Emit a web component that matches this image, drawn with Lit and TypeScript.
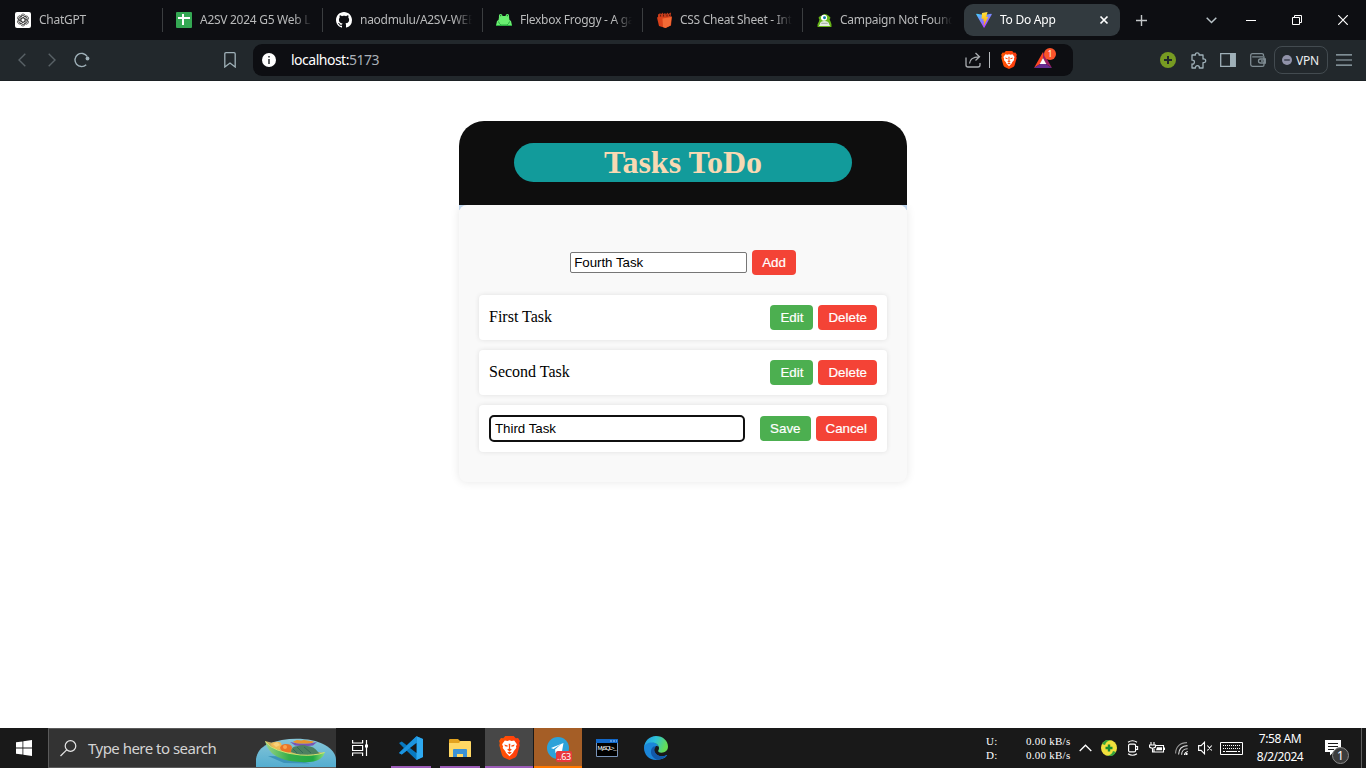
import { LitElement, html, css, svg, nothing, type TemplateResult } from "lit";
import { customElement, property } from "lit/decorators.js";

const icon = (w: number, h: number, box: string, body: unknown) =>
  html`<svg width=${w} height=${h} viewBox=${box} fill="none" aria-hidden="true">${body}</svg>`;

const braveLion = (size: number, h: number) =>
  icon(size, h, "0 0 20 23", svg`
    <defs><linearGradient id="lg" x1="0" x2="1"><stop stop-color="#ff5500"/><stop offset="1" stop-color="#ff3a10"/></linearGradient></defs>
    <path fill="url(#lg)" d="M6 0h8l2 2.200 2.200-.2L20 4.800l-.7 2 .5 2-2.600 9.500c-.3 1-.9 1.700-1.700 2.200L10 23l-5.500-2.500c-.8-.5-1.400-1.200-1.700-2.200L.2 8.800l.5-2L0 4.800 1.800 2l2.200.2z"/>
    <path fill="#fff" d="M5.500 4.200 8 4.700l2-.6 2 .6 2.500-.5 2.600 3.600-.9 2.300.3 1.400-2.500 3-.6 1.500L10 19.500 6.600 16 6 14.500l-2.500-3 .3-1.400-.9-2.300z"/>
    <path fill="#ff4a0a" d="m5 8.200 3.300 1-.2 1.200-2.300-.5zM15 8.200l-3.300 1 .2 1.200 2.300-.5zM9.200 7.500h1.600l-.3 4.500 1.800 1.100L10 14.500l-2.300-1.400 1.800-1.100zM7.800 15.800l2.200-1 2.200 1L10 17.400z"/>`);

const favicons: Record<string, TemplateResult> = {
  gpt: icon(16, 16, "0 0 16 16", svg`<rect width="16" height="16" rx="2" fill="#fff"/>
    <g stroke="#333" stroke-width=".75">
      ${[0, 60, 120, 180, 240, 300].map((a) => svg`<path transform="rotate(${a} 8 8)" d="M5.900 6.800V4.300C5.900 1.700 9.200 1.400 10.200 3.300M5.900 6.800 8 5.600l2.300 1.300M5.900 4.500 8 3.300l3.300 1.900"/>`)}
    </g>`),
  sheet: icon(16, 16, "0 0 16 16", svg`<rect width="16" height="16" rx="1" fill="#34a853"/><path d="M7 2v11M2 6h12" stroke="#fff" stroke-width="2"/>`),
  github: icon(16, 16, "0 0 16 16", svg`<path fill="#fff" d="M8 0C3.580 0 0 3.580 0 8c0 3.540 2.290 6.530 5.470 7.590.4.070.55-.17.55-.38 0-.19-.01-.82-.01-1.490-2.010.37-2.530-.49-2.690-.94-.09-.23-.48-.94-.82-1.130-.28-.15-.68-.52-.01-.53.63-.01 1.080.58 1.230.82.72 1.210 1.870.87 2.330.66.070-.52.28-.87.51-1.070-1.780-.2-3.640-.89-3.640-3.950 0-.87.31-1.590.82-2.150-.08-.2-.36-1.020.08-2.120 0 0 .67-.21 2.200.82.64-.18 1.320-.27 2-.27s1.360.09 2 .27c1.530-1.040 2.200-.82 2.200-.82.44 1.100.16 1.920.08 2.120.51.56.82 1.270.82 2.150 0 3.070-1.870 3.750-3.650 3.950.29.25.54.73.54 1.480 0 1.070-.01 1.930-.01 2.200 0 .21.15.46.55.38A8.010 8.010 0 0 0 16 8c0-4.420-3.580-8-8-8z"/>`),
  froggy: icon(16, 12, "0 0 16 12", svg`<path fill="#69ef70" d="M3 3Q2.500 0 4.500 0T6.500 2h3Q9.500 0 11.500 0T13 3l.5 3 1.500 1 1 4.500H0L1 7l1.500-1z"/><path fill="#178a2c" d="M4 1h1.200v1.200H4zM10.800 1H12v1.200h-1.200z"/><path stroke="#2aab3f" d="M2.500 7.500Q3 10 5 11h6q2-1 2.500-3.500M0 11.500h16"/>`),
  hand: icon(15, 16, "0 0 15 16", svg`<path fill="#d9411a" d="M0 5.500 4 4l11 .5-1 9L8.500 16 2 14z"/><path fill="#c63c1b" d="M1 5V2.500L3.500 1v1.500L6 .5V2l2.500-1v1.500L11 .5V2l3-1.500L13.500 5z"/><path fill="#f26a35" d="m5.500 6.500 9-1.500-1 8.500-5 2.500-2.500-1z"/><path stroke="#3b1208" stroke-width=".7" d="M3.500 4.500V3M6.500 4.500V2.500M10 4.500v-2M12.500 4V2.500"/>`),
  monster: icon(15, 13, "0 0 15 14", svg`<path fill="#67b518" d="m1 4 2-2 2 1V1l2.500-1L10 .500 12 2l2 2-1 2 1 2 1 3v3H0v-3l1.500-3L2 6z"/><circle cx="7" cy="4" r="3.300" fill="#fff"/><circle cx="7.500" cy="4" r="1.600" fill="#0a77a8"/><path fill="#e3ebe0" d="M2.500 11q.5-3.500 5-3.500t5 3.500l1 2h-12z"/><path stroke="#9aa39a" d="M4 10h7"/>`),
  vite: icon(16, 16, "0 0 32 32", svg`<defs><linearGradient id="v1" x1="0" y1="0" x2=".6" y2="1"><stop stop-color="#41d1ff"/><stop offset="1" stop-color="#bd34fe"/></linearGradient><linearGradient id="v2" x1=".4" y1="0" x2=".5" y2="1"><stop stop-color="#ffea83"/><stop offset=".1" stop-color="#ffdd35"/><stop offset="1" stop-color="#ffa800"/></linearGradient></defs>
    <path fill="url(#v1)" d="M31.500 5 17 31q-.8 1.300-1.600 0L.5 5q-.7-1.600 1-1.500L16 6l14.500-2.500q1.700 0 1 1.500z"/><path fill="url(#v2)" d="m23 0-11 2.200-.8 11.800 4-.8-.8 5 2.400-.6-1.600 8 1.200.4 8.200-16.500-4.200.7L23 0z"/>`),
};

@customElement("browser-tab")
class BrowserTab extends LitElement {
  @property() name = "";
  @property() fav = "";
  @property({ type: Boolean, reflect: true }) active = false;
  static styles = css`
    :host { display: flex; align-items: center; height: 24px; width: 160px; box-sizing: border-box; padding-left: 13px; border-right: 1px solid #3b3e40; flex: none; }
    :host([first]) { width: 161px; }
    :host([last]) { border-right-color: transparent; width: 161px; }
    :host([active]) { height: 32px; width: 156px; padding-left: 12px; border: 0; border-radius: 9px; background: #323a3f; }
    .fav { width: 16px; height: 16px; display: grid; place-items: center; margin-right: 8px; flex: none; }
    .name { width: 112px; overflow: hidden; white-space: nowrap; font: 12px/20px "Noto Sans", "Open Sans", sans-serif; letter-spacing: -0.28px; color: #b9babb; -webkit-mask-image: linear-gradient(90deg, #000 84%, transparent); mask-image: linear-gradient(90deg, #000 84%, transparent); }
    :host([active]) .name { width: 99px; color: #fff; letter-spacing: -0.25px; }
  `;
  render() {
    return html`<span class="fav">${favicons[this.fav]}</span><span class="name">${this.name}</span>
      ${this.active ? icon(10, 10, "0 0 10 10", svg`<path stroke="#fff" stroke-width="1.700" d="m1.500 1.500 7 7m0-7-7 7"/>`) : nothing}`;
  }
}

@customElement("browser-chrome")
class BrowserChrome extends LitElement {
  static styles = css`
    :host { display: block; font-family: "Noto Sans", "Open Sans", sans-serif; }
    svg { display: block; }
    .tabs { height: 40px; background: #0d0e12; display: flex; align-items: center; padding-left: 2px; }
    .slot { display: grid; place-items: center; width: 30px; height: 32px; flex: none; }
    .new { width: 42px; }
    .drop { width: 40px; margin-left: 29px; }
    .win { width: 40px; }
    .restore { width: 52px; }
    .bar { height: 41px; box-sizing: border-box; background: #22282c; border-bottom: 1px solid #1c2124; display: flex; align-items: center; padding-left: 7px; }
    .mark { margin-left: 118px; margin-right: 8px; }
    .address { width: 820px; height: 32px; border-radius: 9px; background: #0d0e12; display: flex; align-items: center; box-sizing: border-box; padding-left: 9px; flex: none; }
    .url { margin-left: 15px; font-size: 14px; line-height: 20px; color: #fff; letter-spacing: -0.5px; flex: 1; }
    .port { color: #a9b0b7; }
    .rule { width: 1px; height: 16px; background: #b6babd; margin-left: 1px; }
    .lion { margin-left: 4px; }
    .bat { position: relative; margin: 0 15px 0 4px; }
    .badge { position: absolute; left: 16px; top: 4px; width: 12px; height: 12px; border-radius: 6px; background: #fb542b; color: #fff; font-size: 8px; line-height: 12px; text-align: center; }
    .exts { margin-left: 80px; display: flex; }
    .vpn { width: 54px; height: 28px; box-sizing: border-box; margin: 0 1px; border: 1px solid #434b50; border-radius: 8px; display: flex; align-items: center; gap: 4px; padding-left: 7px; font-size: 12px; letter-spacing: -0.2px; color: #eceef0; }
  `;
  render() {
    const c = "#9fb0b8";
    return html`
      <div class="tabs">
        <browser-tab first fav="gpt" name="ChatGPT"></browser-tab>
        <browser-tab fav="sheet" name="A2SV 2024 G5 Web L"></browser-tab>
        <browser-tab fav="github" name="naodmulu/A2SV-WEB"></browser-tab>
        <browser-tab fav="froggy" name="Flexbox Froggy - A ga"></browser-tab>
        <browser-tab fav="hand" name="CSS Cheat Sheet - Int"></browser-tab>
        <browser-tab last fav="monster" name="Campaign Not Found"></browser-tab>
        <browser-tab active fav="vite" name="To Do App"></browser-tab>
        <span class="slot new">${icon(11, 11, "0 0 11 11", svg`<path stroke="#c4c7c9" stroke-width="1.400" d="M5.500 0v11M0 5.500h11"/>`)}</span>
        <span class="slot drop">${icon(11, 7, "0 0 11 7", svg`<path stroke="#b9c3c8" stroke-width="1.500" d="m.7.8 4.800 4.700L10.300.8"/>`)}</span>
        <span class="slot win">${icon(10, 1, "0 0 10 1", svg`<path fill="#fff" d="M0 0h10v1H0z"/>`)}</span>
        <span class="slot restore">${icon(10, 10, "0 0 10 10", svg`<path stroke="#fff" d="M.5 2.500h7v7h-7zM2.500 2.500v-2h7v7h-2"/>`)}</span>
        <span class="slot win">${icon(10, 10, "0 0 10 10", svg`<path stroke="#fff" stroke-width="1.200" d="m.2.2 9.600 9.600m0-9.600L.2 9.800"/>`)}</span>
      </div>
      <div class="bar">
        <span class="slot">${icon(8, 14, "0 0 8 14", svg`<path stroke="#596166" stroke-width="1.400" d="M7.300.7 1 7l6.300 6.300"/>`)}</span>
        <span class="slot">${icon(8, 14, "0 0 8 14", svg`<path stroke="#596166" stroke-width="1.400" d="M.7.7 7 7 .7 13.300"/>`)}</span>
        <span class="slot">${icon(16, 16, "0 0 16 16", svg`<path stroke=${c} stroke-width="1.400" d="M12.200 12.700A6.600 6.600 0 1 1 13.200 4.500"/><circle cx="13.500" cy="6.500" r="1.900" fill=${c}/>`)}</span>
        <span class="slot mark">${icon(12, 16, "0 0 12 16", svg`<path stroke=${c} stroke-width="1.300" d="M.8 2Q.8.700 2 .700h8q1.200 0 1.200 1.300v13L6 11 .8 15z"/>`)}</span>
        <div class="address">
          ${icon(14, 14, "0 0 14 14", svg`<circle cx="7" cy="7" r="7" fill="#fff"/><path stroke="#25282c" stroke-width="1.500" d="M7 6v5M7 3v1.600"/>`)}
          <span class="url">localhost:<span class="port">5173</span></span>
          <span class="slot">${icon(16, 16, "0 0 16 16", svg`<path stroke="#a9adb0" stroke-width="1.300" d="M1 5.500V13q0 2 2 2h10q2 0 2-2v-2M4.500 11.500Q5 5 14 4.800M10.500 1l4 3.800-4 3.700"/>`)}</span>
          <span class="rule"></span>
          <span class="slot lion">${braveLion(16, 18)}</span>
          <span class="slot bat">${icon(18, 16, "0 0 18 16", svg`<path fill="#ff4724" d="M9 0 0 16l6-4 3-6z"/><path fill="#9e1f63" d="m9 0 9 16-6-4-3-6z"/><path fill="#662d91" d="M0 16h18l-6-4H6z"/><path fill="#fff" d="m9 6 3.300 6H5.700z"/>`)}<span class="badge">1</span></span>
        </div>
        <div class="exts">
          <span class="slot">${icon(16, 16, "0 0 16 16", svg`<circle cx="8" cy="8" r="8" fill="#779b22"/><path stroke="#20282c" stroke-width="2" d="M8 4v8M4 8h8"/>`)}</span>
          <span class="slot">${icon(17, 17, "0 0 17 17", svg`<path stroke=${c} stroke-width="1.300" stroke-linejoin="round" d="M2 3h3.500C5 1.500 6 .8 7.200.8S9.500 1.600 9 3h4v4c1.700-.4 2.700.5 2.700 1.800S14.600 11 13 10.600V16H9.300c.3-1.500-.6-2.300-1.900-2.300S5.200 14.600 5.500 16H2v-4c1.600.3 2.400-.6 2.400-1.900S3.600 7.900 2 8.200z"/>`)}</span>
          <span class="slot">${icon(16, 14, "0 0 16 14", svg`<path stroke=${c} stroke-width="1.300" d="M.7.7h14.600v12.600H.7z"/><path fill=${c} d="M10 0h5v14h-5z"/>`)}</span>
          <span class="slot">${icon(16, 14, "0 0 16 14", svg`<path stroke="#7f8c93" stroke-width="1.300" d="M13.500 3V2q0-1.300-1.500-1.300H2.500Q.7.700.7 2.500v9q0 1.800 1.800 1.800h10q1.500 0 1.500-1.300V3.800H2.200M15.300 6H10.500q-2 0-2 2t2 2h4.800z"/><path fill="#7f8c93" d="M11 7.300h2v1.400h-2z"/>`)}</span>
        </div>
        <div class="vpn">${icon(10, 10, "0 0 10 10", svg`<circle cx="5" cy="5" r="5" fill="#9193a9"/><path stroke="#3d4150" stroke-width="1.500" d="M2.200 5h5.600"/>`)}VPN</div>
        <span class="slot">${icon(16, 12, "0 0 16 12", svg`<path stroke=${c} stroke-width="1.200" d="M0 .8h16M0 6h16M0 11.200h16"/>`)}</span>
      </div>`;
  }
}

@customElement("todo-card")
class TodoCard extends LitElement {
  static styles = css`
    :host { display: block; width: 448px; margin: 0 auto; font: 16px "Liberation Serif", serif; color: #000; }
    .head { height: 84px; box-sizing: border-box; padding: 22px 55px 0; background: #0e0e0e; border-radius: 25px 25px 0 0; }
    h1 { margin: 0; height: 39px; border-radius: 20px; background: #129b9b; color: #f8d9b3; font-size: 32px; line-height: 39px; text-align: center; }
    .body { background: linear-gradient(#c5dcf4, #c5dcf4) top / 100% 5px no-repeat; }
    .card { height: 277px; box-sizing: border-box; padding: 45px 20px 0; background: #f9f9f9; border-radius: 8px; box-shadow: 0 0 10px rgba(0, 0, 0, 0.1); clip-path: inset(0 -20px -20px -20px); }
    .form { display: flex; justify-content: center; align-items: center; gap: 5px; height: 25px; margin-bottom: 20px; }
    .row { display: flex; align-items: center; gap: 5px; padding: 10px; margin-bottom: 10px; background: #fff; border-radius: 4px; box-shadow: 0 0 5px rgba(0, 0, 0, 0.1); }
    .label { flex: 1; line-height: 18px; padding-bottom: 1px; }
    input, button { font: 13.333px "Liberation Sans", sans-serif; box-sizing: border-box; }
    input { margin: 0; color: #000; background: #fff; letter-spacing: -0.03px; }
    .new { width: 177px; height: 21px; padding: 1px 2px 1px 3px; border: 1px solid #767676; border-radius: 2px; }
    .edit { width: 256px; height: 27px; padding: 0 4px; border: 2px solid #101010; border-radius: 5px; margin-right: auto; outline: none; }
    button { height: 25px; padding: 0 10px; border: 0; border-radius: 4px; color: #fff; background: #f44336; line-height: 25px; -webkit-text-stroke: 0.2px #fff; }
    .ok { background: #4caf50; min-width: 43px; }
  `;
  render() {
    return html`
      <div class="head"><h1>Tasks ToDo</h1></div>
      <div class="body"><div class="card">
        <div class="form"><input class="new" .value=${"Fourth Task"} /><button>Add</button></div>
        ${["First Task", "Second Task"].map((t) => html`<div class="row"><span class="label">${t}</span><button class="ok">Edit</button><button>Delete</button></div>`)}
        <div class="row"><input class="edit" .value=${"Third Task"} /><button class="ok">Save</button><button>Cancel</button></div>
      </div></div>`;
  }
}

@customElement("task-bar")
class TaskBar extends LitElement {
  static styles = css`
    :host { display: flex; height: 40px; background: #191919; color: #fff; font-family: "Noto Sans", "Open Sans", sans-serif; }
    svg { display: block; }
    .app { width: 48px; height: 40px; box-sizing: border-box; display: grid; place-items: center; position: relative; margin-right: 1px; flex: none; }
    .start { margin-right: 0; }
    .view { margin-right: 3px; }
    .open::after { content: ""; position: absolute; left: 4px; right: 4px; bottom: 0; height: 2px; background: #9c5cb8; }
    .wide::after { left: 0; right: 0; }
    .brave { background: #474747; }
    .tg { background: #a55e26; }
    .tg::after { background: #ff7800; }
    .count { position: absolute; left: 22px; top: 23px; width: 16px; height: 11px; border-radius: 2px; background: #e8393c; font-size: 9px; line-height: 11px; text-align: center; letter-spacing: -0.3px; }
    .search { width: 288px; height: 40px; box-sizing: border-box; border: 1px solid #5a5a5a; border-right-width: 0; background: #333; display: flex; align-items: center; padding-left: 11px; flex: none; }
    .hint { flex: 1; margin-left: 11px; font-size: 15px; letter-spacing: -0.52px; color: #d4d4d4; }
    .tray { margin-left: auto; display: flex; align-items: center; }
    .net { display: grid; grid-template-columns: 40px 45px; font: 11px/14px "Liberation Serif", serif; letter-spacing: 0.25px; white-space: nowrap; }
    .cell { display: grid; place-items: center; width: 28px; height: 40px; }
    .narrow { width: 20px; }
    .kbd { width: 33px; }
    .clock { width: 64px; text-align: center; font-size: 12px; line-height: 18px; letter-spacing: -0.45px; }
    .note { width: 49px; position: relative; box-sizing: border-box; padding-right: 8px; }
    .one { position: absolute; left: 20px; top: 19px; width: 17px; height: 17px; border: 1px solid #8b8b8b; border-radius: 9px; background: #3c3c3c; font-size: 12px; line-height: 15px; text-align: center; box-sizing: border-box; }
    .end { width: 4px; height: 40px; border-left: 1px solid #5f5f5f; }
  `;
  render() {
    return html`
      <span class="app start">${icon(16, 16, "0 0 16 16", svg`<path fill="#fff" d="M0 2.300 6.500 1.400V7.500H0zM7.300 1.300 16 0v7.500H7.300zM0 8.400h6.500v6.200L0 13.700zM7.300 8.400H16V16l-8.700-1.200z"/>`)}</span>
      <div class="search">
        ${icon(17, 17, "0 0 17 17", svg`<circle cx="10.500" cy="6" r="5.300" stroke="#e6e6e6" stroke-width="1.200"/><path stroke="#e6e6e6" stroke-width="1.200" d="M6.700 9.800.5 16"/>`)}
        <span class="hint">Type here to search</span>
        ${icon(80, 38, "0 0 80 38", svg`<defs><linearGradient id="sea" x1="0" y1="0" x2="0" y2="1"><stop stop-color="#86c6d8"/><stop offset="1" stop-color="#54add0"/></linearGradient><linearGradient id="hull" x1="0" x2="1"><stop stop-color="#9ad58a"/><stop offset=".4" stop-color="#35ae4a"/><stop offset=".8" stop-color="#22a843"/><stop offset="1" stop-color="#8fe07a"/></linearGradient></defs>
          <path fill="url(#sea)" d="M0 38V30C1 23 5 18 12 15 30 8 54 8 69 16c7 4 11 9 11 15v7z"/>
          <path fill="#3c93ba" d="m12 27 16 7 26 .500-24-7z"/>
          <path fill="#7a55b3" d="M34 13q14 3 27 0l-4 3.500q-9 1.500-18 0z"/><path fill="#e8952b" d="m37 12.500 4-1.500 4 .500 3-.500 10 1.500-2 1.500q-9 1-17 0z"/>
          <path fill="#c9ae60" d="m9 12 8 2 18 5 27 4 6 1-8 5-25 1-19-6z"/>
          <path fill="#f0ba55" d="M15 16q0-3 4-3 4-1 6 1l2 6-7 1z"/><path fill="#ea7426" d="M24 19q1-4 6-4 5 0 6 3l-1 5-8 1z"/><path fill="#f7d27c" d="m17 15 4-2 3 3-4 2z"/><circle cx="29" cy="18" r="2" fill="#f9a44f"/>
          <path fill="#4d8061" d="M35 23q0-6 7-6 5-2 9 0 7 0 11 6l2 2-18 2z"/><path stroke="#356a55" d="m41 18 6 6m1-6 7 6m-18-4 4 4"/>
          <path fill="url(#hull)" d="M9 12q4 6 12 8.500 10 4 23 5.500 14 1.500 25-3-1 4-5 7-7 4-19 3-20-1-28-8-6-5-8-13z"/>
          <path stroke="#dce66e" stroke-width=".9" d="M9.500 12.500q4 6 12 8.500 10 4 23 5 14 1 24-2.500"/>`)}
      </div>
      <span class="app view">${icon(17, 16, "0 0 17 16", svg`<path stroke="#fff" stroke-width="1.200" d="M.6 0v3h10V0M.6 16v-3h10v3M.6 5.500h10v5H.6zM14.500 0v16"/><path fill="#fff" d="M13 4.500h3v3h-3z"/>`)}</span>
      <span class="app open">${icon(24, 24, "0 0 24 24", svg`<path fill="#0879c0" d="M17.500.3 24 3v18l-6.500 3L7.700 14.700 2.800 18.500 0 17l4.900-5L0 7l2.800-1.500 4.900 3.800z"/><path fill="#2ea9f0" d="M17.500.3 24 3v18l-6.500 3z"/><path fill="#1c94df" d="m0 17 17.500-16.700v6.400L2.800 18.500z"/><path fill="#191919" d="M17.500 7v10L11 12z"/>`)}</span>
      <span class="app open">${icon(22, 19, "0 0 22 19", svg`<path fill="#e3a31f" d="M0 1q0-1 1-1h8l2 2h10v4H0z"/><path fill="#ffd864" d="M0 4h10l1.500-2H21q1 0 1 1v15H0z"/><path fill="#3b92d5" d="M4 18v-7q0-1 1-1h12q1 0 1 1v7h-4v-3H8v3z"/>`)}</span>
      <span class="app open wide brave">${braveLion(21, 24)}</span>
      <span class="app open wide tg">${icon(22, 22, "0 0 22 22", svg`<circle cx="11" cy="11" r="11" fill="#2da2d9"/><path fill="#fff" d="m4 11 12.500-5-2 11-4-2.800-2 2-.4-3.700 6-5.500-7.600 5z"/>`)}<span class="count">..63</span></span>
      <span class="app">${icon(22, 18, "0 0 22 18", svg`<path fill="#000" stroke="#7994b8" d="M.5.5h21v17H.5z"/><path fill="#1268c9" d="M0 0h22v4H0z"/><path stroke="#9bc6fa" stroke-dasharray="2 1" d="M14 2h7"/><text x="1.500" y="10.500" fill="#fff" font-family="Liberation Sans" font-size="6" textLength="19">MySQL&gt;_</text>`)}</span>
      <span class="app">${icon(24, 24, "0 0 24 24", svg`<defs><linearGradient id="e1" x1="0" x2="1" y1="0" y2=".3"><stop stop-color="#2295e4"/><stop offset=".5" stop-color="#2ec2d8"/><stop offset="1" stop-color="#65dc55"/></linearGradient></defs>
        <path fill="#1b86d8" d="M0 12C0 8 3 6 7 6c4 0 7 2 7.500 5-.5-1-2-1.300-3-.5-2.500 2-2 6 1.500 8.500 3 2 7 1.500 9.500 0 .6-.3.900 0 .5.600C21 22.500 17 24 12 24 5 24 0 18.500 0 12z"/>
        <path fill="#1259a8" d="M9.500 10.500c-3 2-3.500 7-.5 10.500 1.500 2 4 3 5.500 2.800 4-.5 6.500-2.300 8.500-4.700-2.500 1.400-6.500 1.900-9.500-.100-3.500-2.500-4-6-1.500-8.500z"/>
        <path fill="url(#e1)" d="M0 11.500C.5 5 5.500 0 12 0c7 0 12 5 12 10.500 0 4-3 6.200-6.500 6.200-3 0-4-1.500-3-2.700 1.500-2 0-6.500-5.500-7.500C5 6 1 7.500 0 11.500z"/>`)}</span>
      <div class="tray">
        <div class="net"><span>U:</span><span>0.00 kB/s</span><span>D:</span><span>0.00 kB/s</span></div>
        <span class="cell">${icon(13, 8, "0 0 13 8", svg`<path stroke="#fff" stroke-width="1.300" d="m.7 7 5.800-5.800L12.300 7"/>`)}</span>
        <span class="cell narrow">${icon(16, 16, "0 0 16 16", svg`<circle cx="8" cy="8" r="8" fill="#f0e03c"/><path fill="#36a33c" d="M1 4a8 8 0 0 1 9-4Q5 1 4 5zM15 12a8 8 0 0 1-9 4q5-1 6-5z"/><path stroke="#178c30" stroke-width="2.400" d="M8 4.500v7M4.500 8h7"/>`)}</span>
        <span class="cell">${icon(12, 16, "0 0 12 16", svg`<rect x="1.600" y="4.100" width="7" height="7.800" rx="1.500" stroke="#fff" stroke-width="1.200"/><path stroke="#fff" stroke-width="1.100" d="M8.600 6.500h2v3h-2M1 2.300Q5.500-.8 10 2.300M1 13.700q4.500 3.100 9 0"/>`)}</span>
        <span class="cell narrow">${icon(16, 14, "0 0 16 14", svg`<path stroke="#fff" stroke-width="1.100" d="M7 4.500h7.500V11H5V8M15.500 6.500v2.500M2 1v3M5 1v3M.5 4h6v2q-3 2.500-6 0zM3.500 7.500V11H5"/><path fill="#fff" d="M8 6.300h5v3H7z"/>`)}</span>
        <span class="cell">${icon(13, 13, "0 0 13 13", svg`<g stroke="#999" stroke-width="1.100"><path d="M.6 11.500C.6 5 5 .6 12 .6"/><path stroke="#ddd" d="M3.600 12.500C3.600 7 7 3.600 12.500 3.600M6.600 12.800c0-3.500 2.400-6 6-6"/></g><path stroke="#fff" d="M9.300 13q0-3 3.500-3.500"/><circle cx="11.500" cy="12" r="1.200" fill="#fff"/>`)}</span>
        <span class="cell narrow">${icon(15, 14, "0 0 15 14", svg`<path stroke="#fff" stroke-width="1.100" d="M.6 4.600h2.500l3.400-3.400v11.600L3.100 9.400H.6zM9.300 4.500l4.500 5M13.800 4.500l-4.500 5"/>`)}</span>
        <span class="cell kbd">${icon(23, 13, "0 0 23 13", svg`<path stroke="#fff" d="M.5.5h22v12H.5z"/><path stroke="#fff" stroke-dasharray="1 1" d="M3 3.500h17M3 6.500h17"/><path stroke="#fff" d="M3 9.500h2M6 9.500h11M18 9.500h2"/>`)}</span>
        <div class="clock">7:58 AM<br />8/2/2024</div>
        <span class="cell note">${icon(16, 16, "0 0 16 16", svg`<path fill="#fff" d="M0 0h16v12H8.500L5 15.500V12H0z"/><path stroke="#191919" d="M3 3.500h10M3 6.500h10M3 9.500h6"/>`)}<span class="one">1</span></span>
        <span class="end"></span>
      </div>`;
  }
}

@customElement("app-root")
class AppRoot extends LitElement {
  static styles = css`
    :host { display: flex; flex-direction: column; width: 1366px; height: 768px; overflow: hidden; background: #fff; }
    .page { flex: 1; padding-top: 40px; background: #fff; }
  `;
  render() {
    return html`<browser-chrome></browser-chrome><main class="page"><todo-card></todo-card></main><task-bar></task-bar>`;
  }
}
